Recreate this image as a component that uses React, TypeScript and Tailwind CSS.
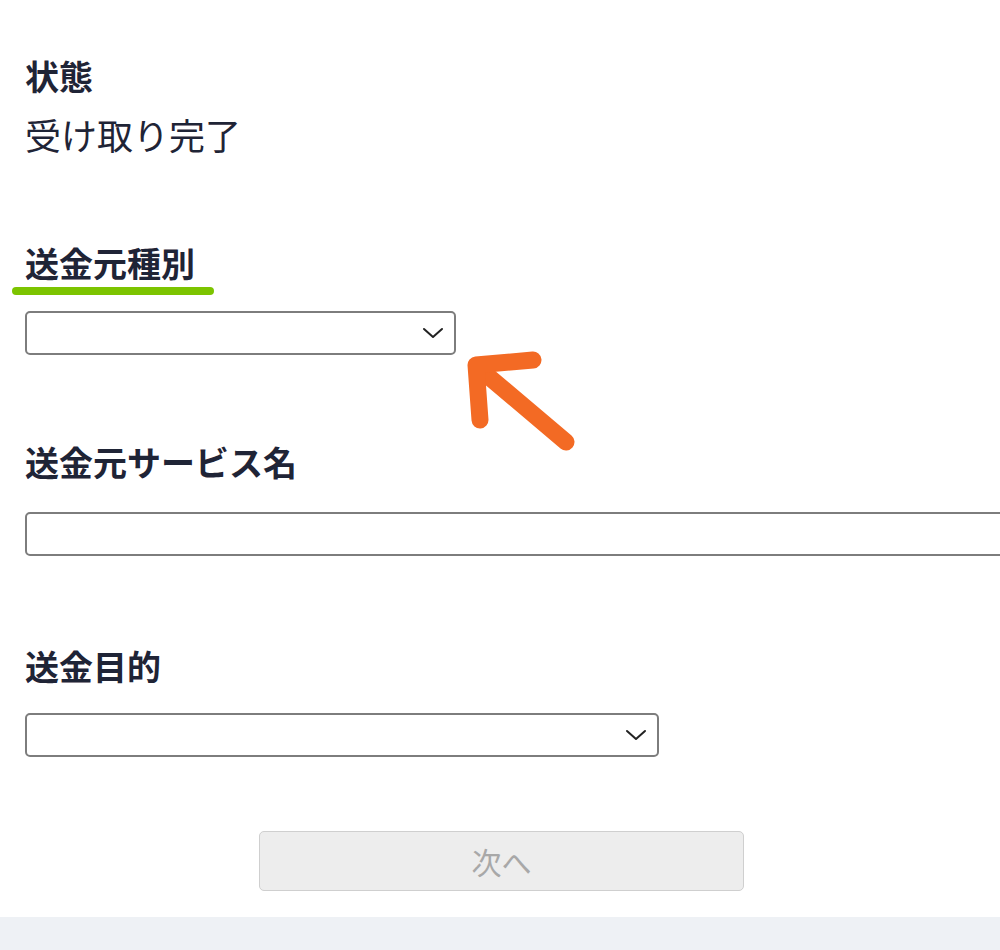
const font = { fontFamily: '"Noto Sans CJK JP", "Noto Sans", sans-serif' };

function Chevron() {
  return (
    <svg width="22" height="14" viewBox="0 0 22 14" className="shrink-0">
      <path d="M2 3 L11 11 L20 3" fill="none" stroke="#222" strokeWidth="2" strokeLinecap="round" strokeLinejoin="round" />
    </svg>
  );
}

function SelectBox({ width }: { width: string }) {
  return (
    <div className={`${width} h-[44px] rounded-[5px] border-2 border-[#7d7d7d] bg-white flex items-center justify-end pr-[10px]`}>
      <Chevron />
    </div>
  );
}

function Label({ children }: { children: string }) {
  return <div className="text-[34px] leading-[40px] font-bold text-[#1f2436]">{children}</div>;
}

export default function App() {
  return (
    <div className="w-[1000px] h-[950px] bg-white overflow-hidden relative flex flex-col" style={font}>
      <div className="flex-1 pl-[25px] pt-[56px]">
        <Label>状態</Label>
        <div className="mt-[17px] text-[36px] leading-[42px] text-[#1f2436]">受け取り完了</div>

        <div className="mt-[88px]">
          <Label>送金元種別</Label>
          <div className="mt-[28px]">
            <SelectBox width="w-[431px]" />
          </div>
        </div>

        <div className="mt-[87px]">
          <Label>送金元サービス名</Label>
          <div className="mt-[30px] w-[1000px] h-[44px] rounded-[5px] border-2 border-[#7d7d7d] bg-white" />
        </div>

        <div className="mt-[90px]">
          <Label>送金目的</Label>
          <div className="mt-[27px]">
            <SelectBox width="w-[634px]" />
          </div>
        </div>

        <div className="mt-[74px] ml-[234px] w-[485px] h-[60px] rounded-[5px] border border-[#cfcfcf] bg-[#ededed] flex items-center justify-center text-[30px] text-[#a8a8a8]">
          次へ
        </div>
      </div>
      <div className="h-[33px] bg-[#eef1f5]" />

      <svg className="absolute left-0 top-0 pointer-events-none" width="1000" height="950">
        <line x1="16" y1="291" x2="210" y2="291" stroke="#7cc400" strokeWidth="8" strokeLinecap="round" />
        <g stroke="#f36a24" strokeWidth="17" strokeLinecap="round" strokeLinejoin="round" fill="none">
          <line x1="566" y1="442" x2="482" y2="371" />
          <polyline points="533,360 476,365 480,420" />
        </g>
      </svg>
    </div>
  );
}
